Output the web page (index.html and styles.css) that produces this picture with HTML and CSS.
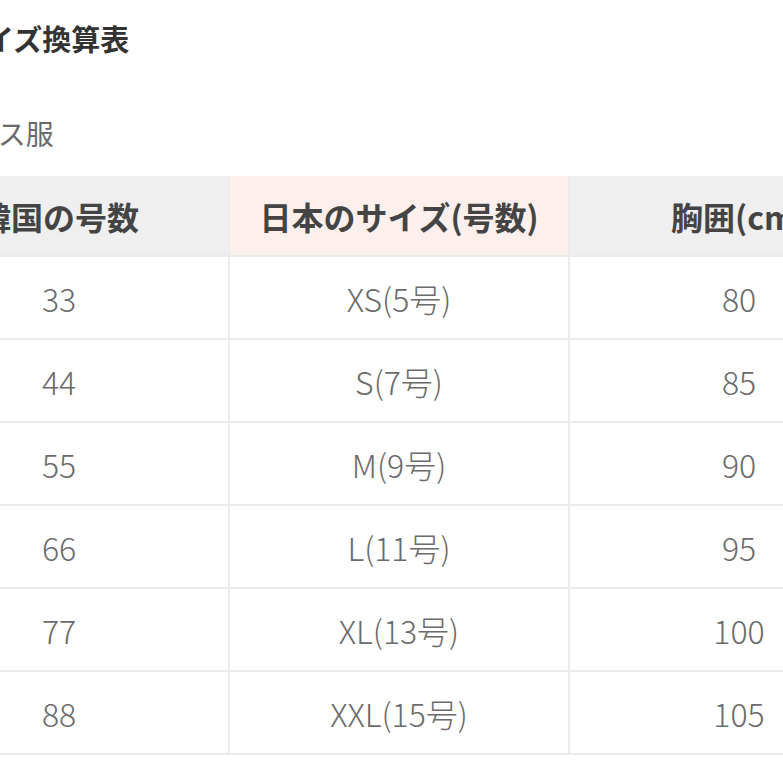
FILE: index.html
```html
<!DOCTYPE html>
<html lang="ja">
<head>
<meta charset="utf-8">
<link rel="stylesheet" href="styles.css">
</head>
<body>
<div class="page">
  <h1 class="title">サイズ換算表</h1>
  <p class="sub">レディース服</p>
  <table class="size-table">
    <thead>
      <tr>
        <th class="gray">韓国の号数</th>
        <th class="pink">日本のサイズ(号数)</th>
        <th class="gray">胸囲(cm)</th>
      </tr>
    </thead>
    <tbody>
      <tr><td>33</td><td>XS(5号)</td><td>80</td></tr>
      <tr><td>44</td><td>S(7号)</td><td>85</td></tr>
      <tr><td>55</td><td>M(9号)</td><td>90</td></tr>
      <tr><td>66</td><td>L(11号)</td><td>95</td></tr>
      <tr><td>77</td><td>XL(13号)</td><td>100</td></tr>
      <tr><td>88</td><td>XXL(15号)</td><td>105</td></tr>
    </tbody>
  </table>
</div>
</body>
</html>
```

FILE: styles.css
```css
html, body {
  margin: 0;
  padding: 0;
  background: #ffffff;
  overflow: hidden;
}
body {
  width: 783px;
  height: 783px;
  font-family: "Noto Sans CJK JP", "Noto Sans", sans-serif;
}
.page {
  margin-left: -112px;
  width: 1100px;
}
.title {
  margin: 0;
  padding: 17px 0 0 68px;
  font-size: 29px;
  line-height: 42px;
  font-weight: 700;
  color: #333333;
}
.sub {
  margin: 0;
  padding: 54px 0 0 1px;
  font-size: 28px;
  line-height: 40px;
  font-weight: 400;
  color: #6a6a6a;
}
.size-table {
  margin-top: 23px;
  border-collapse: collapse;
  table-layout: fixed;
  width: 1014px;
}
.size-table th,
.size-table td {
  width: 338px;
  text-align: center;
  padding: 0;
  border: 2px solid #ebebeb;
}
.size-table th {
  height: 79px;
  font-size: 32px;
  font-weight: 700;
  color: #444444;
  border-top: none;
}
.size-table th.gray {
  background: #efefef;
}
.size-table th.pink {
  background: #fcefec;
}
.size-table td {
  height: 81px;
  font-size: 32px;
  font-weight: 300;
  color: #6b6b6b;
}
```
